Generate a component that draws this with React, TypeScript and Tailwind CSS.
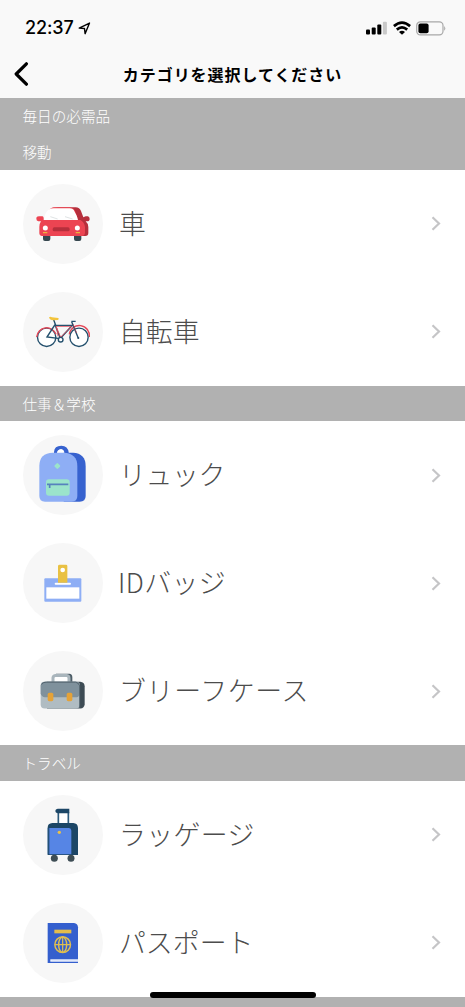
import type { ReactNode } from "react";

type Item = {
  label: string;
  icon: ReactNode;
  labelClass?: string;
};

type Section = {
  title: string;
  items: Item[];
};

type CategoryIconProps = {
  viewBox: string;
  children: ReactNode;
};

const CategoryIcon = ({ viewBox, children }: CategoryIconProps) => (
  <svg viewBox={viewBox} className="size-20" aria-hidden="true">
    {children}
  </svg>
);

const CarIcon = () => (
  <CategoryIcon viewBox="8 11 240 240">
    <path d="M94 81H166Q178 82 182 92L189 111L196 108H203Q208 110 208 116Q208 123 200 123H196Q204 130 204 140V158Q204 167 195 167H160L150 120L160 88Z" fill="#b62f3c" />
    <rect x="68" y="156" width="22" height="26" rx="6" fill="#36474f" />
    <rect x="161" y="156" width="22" height="26" rx="6" fill="#36474f" />
    <path d="M76 120L85 94Q89 82 100 81H148Q160 82 165 94L174 120Z" fill="#ec4452" />
    <path d="M72 119C71 105 79 91 87 87Q91 84 100 84H148Q158 84 163 94Q170 105 173 119Z" fill="#fff" />
    <path d="M90 109L112 116M134 109L157 116" stroke="#ced4d6" strokeWidth="2" />
    <path d="M48 115Q48 108 56 108H66Q71 109 70 119H180Q192 125 194 140V158Q193 167 184 167H65Q57 166 57 158V140Q57 130 62 123H54Q48 122 48 115Z" fill="#ec4452" />
    <rect x="97" y="141" width="51" height="12" rx="5" fill="#b62f3c" />
    <circle cx="75" cy="143" r="7.5" fill="#fff" />
    <circle cx="171" cy="143" r="7.5" fill="#fff" />
    <path d="M68 157H81M166 157H179" stroke="#edb33d" strokeWidth="4" />
  </CategoryIcon>
);

const BikeIcon = () => (
  <CategoryIcon viewBox="8 4 240 240">
    <circle cx="79" cy="140" r="29" fill="#fff" />
    <circle cx="176" cy="140" r="29" fill="#fff" />
    <g fill="none" strokeWidth="4.2">
      <circle cx="79" cy="140" r="27.5" stroke="#24506d" />
      <path d="M49 139A30 30 0 0 1 107 131M147 131A30 30 0 0 1 207 139" stroke="#e54858" />
      <circle cx="176" cy="140" r="27.5" stroke="#24506d" />
      <path d="M104 102L120 143L157 103M104 102L80 139L119 144" stroke="#24506d" />
      <path d="M106 107H153L121 140L108 109M109 111L113 137" stroke="#e54858" strokeWidth="2.5" />
      <path d="M100 87L106 104H158M153 92H166M154 93L174 143" stroke="#24506d" />
      <path d="M158 100L169 127" stroke="#c43f54" strokeWidth="2" />
      <circle cx="121" cy="147" r="7" fill="#fff" stroke="#24506d" />
    </g>
    <circle cx="174" cy="142" r="3" fill="#24506d" />
    <path d="M86 80Q90 77 95 80L114 82Q117 85 113 88L99 89Q88 89 86 80Z" fill="#f3c43c" />
  </CategoryIcon>
);

const BackpackIcon = () => (
  <CategoryIcon viewBox="8 10 240 240">
    <path d="M101 70V61Q102 42 123 42Q143 43 145 62V70H132V61Q130 52 121 53Q112 54 112 66V70Z" fill="#3762cf" />
    <path d="M110 70V62Q112 54 122 53Q130 54 131 63V70Z" fill="#fff" />
    <path d="M130 63H158Q196 65 196 103V193Q196 210 178 210H130Z" fill="#3762cf" />
    <path d="M57 103Q57 64 98 63H130Q171 65 171 103V193Q171 210 154 210H74Q57 210 57 193Z" fill="#8eaef5" />
    <rect x="104" y="96" width="14" height="14" rx="3" transform="rotate(45 111 103)" fill="#9be4cb" />
    <rect x="77" y="143" width="71" height="49" rx="9" fill="#9be4cb" />
    <path d="M80 158H144M88 158V169" stroke="#5682bd" strokeWidth="5" />
  </CategoryIcon>
);

const BadgeIcon = () => (
  <CategoryIcon viewBox="8 10 240 240">
    <rect x="72" y="116" width="111" height="70" rx="3" fill="#8eaef5" />
    <rect x="78" y="143" width="99" height="34" fill="#fff" />
    <rect x="103" y="129" width="49" height="6" rx="3" fill="#fff" />
    <path d="M113 79Q113 75 118 75H137Q141 75 141 79V129H113Z" fill="#e9c143" />
    <circle cx="127" cy="91" r="7" fill="#fff" />
  </CategoryIcon>
);

const BriefcaseIcon = () => (
  <CategoryIcon viewBox="8 3.5 240 240">
    <path d="M107 72H147Q156 73 156 82V100H141V84H107Z" fill="#4d5d67" />
    <path d="M98 98V84Q99 77 106 77H139Q146 78 146 85V98" fill="#fff" stroke="#a9b5bc" strokeWidth="9" />
    <path d="M80 96H180Q192 97 193 109V163Q192 175 180 176H80Z" fill="#3d4b54" />
    <rect x="61" y="96" width="118" height="80" rx="12" fill="#b0bcc2" />
    <path d="M61 108Q62 96 73 96H167Q178 97 179 108V130Q178 141 168 142H74Q63 141 61 130Z" fill="#7f919c" />
    <path d="M64 104Q67 97 77 97H165Q175 98 178 108V174" fill="none" stroke="#52636e" strokeWidth="3" />
    <rect x="82" y="129" width="17" height="25" rx="5" fill="#e4a238" />
    <rect x="139" y="129" width="17" height="25" rx="5" fill="#e4a238" />
  </CategoryIcon>
);

const LuggageIcon = () => (
  <CategoryIcon viewBox="8 6 240 240">
    <rect x="113" y="57" width="31" height="36" fill="#fff" />
    <path d="M114 57V94M144 57V94" stroke="#2c5a7c" strokeWidth="5" />
    <path d="M112 47H147V61H112Q105 60 105 54Q105 48 112 47Z" fill="#1c4666" />
    <path d="M82 104Q82 91 96 90H159Q172 91 173 104V186H82Z" fill="#1c4666" />
    <path d="M87 105H146Q153 106 153 113V184H87Z" fill="#5685e5" />
    <path d="M83 105V184" stroke="#34689e" strokeWidth="2" />
    <circle cx="102" cy="196" r="10.5" fill="#3e4d55" />
    <circle cx="152" cy="196" r="10.5" fill="#3e4d55" />
    <circle cx="117" cy="118" r="5" fill="#ebc146" />
  </CategoryIcon>
);

const PassportIcon = () => (
  <CategoryIcon viewBox="8 9 240 240">
    <path d="M82 69H161Q172 70 173 82V189H82Z" fill="#345fce" />
    <path d="M90 178H173V185H90Z" fill="#fff" />
    <path d="M93 182H173" stroke="#b8c8f2" strokeWidth="1.5" />
    <rect x="102" y="89" width="51" height="11" fill="#e3bd4c" />
    <g fill="none" stroke="#dfbe50" strokeWidth="4.4">
      <circle cx="127" cy="134" r="23.5" />
      <ellipse cx="127" cy="134" rx="12" ry="23" />
      <path d="M127 111V157M104 134H150" strokeWidth="3.6" />
    </g>
  </CategoryIcon>
);

const sections: Section[] = [
  { title: "毎日の必需品", items: [] },
  {
    title: "移動",
    items: [
      { label: "車", icon: <CarIcon /> },
      { label: "自転車", icon: <BikeIcon /> },
    ],
  },
  {
    title: "仕事＆学校",
    items: [
      { label: "リュック", icon: <BackpackIcon />, labelClass: "tracking-[-0.4px]" },
      { label: "IDバッジ", icon: <BadgeIcon />, labelClass: "tracking-[0.4px] -ml-px" },
      { label: "ブリーフケース", icon: <BriefcaseIcon />, labelClass: "tracking-[0.7px]" },
    ],
  },
  {
    title: "トラベル",
    items: [
      { label: "ラッゲージ", icon: <LuggageIcon />, labelClass: "tracking-[0.4px]" },
      { label: "パスポート", icon: <PassportIcon /> },
    ],
  },
];

const StatusBar = () => (
  <div className="flex h-[50px] items-center justify-between pt-[6px] pr-[19px] pl-[25px]">
    <div className="flex items-center gap-[4px]">
      <span className="font-['Inter','Liberation_Sans',sans-serif] text-[18px] leading-6 font-medium tracking-[-0.1px]">22:37</span>
      <svg width="13" height="13" viewBox="0 0 13 13" fill="none" stroke="currentColor" strokeWidth="1.4" strokeLinejoin="round" aria-hidden="true">
        <path d="M1.2 6.1L11.5 1.1L7.1 11.7L6.5 6.5Z" />
      </svg>
    </div>
    <div className="flex items-center">
      <svg width="21" height="14" viewBox="0 0 21 14" aria-hidden="true">
        <rect x="0" y="8.5" width="4" height="5" rx="1" />
        <rect x="5.7" y="6.5" width="4" height="7" rx="1" />
        <rect x="11.3" y="3.5" width="4" height="10" rx="1" />
        <rect x="16.9" y="0.7" width="4" height="12.8" rx="1" fill="#c9c9c9" />
      </svg>
      <svg className="ml-[6px]" width="18" height="14" viewBox="0 0 18 14" fill="none" stroke="currentColor" strokeWidth="2.7" aria-hidden="true">
        <path d="M0.9 5.1Q9 -1.8 17.1 5.1M3.8 8.6Q9 4.2 14.2 8.6" />
        <path d="M6 10.9Q9 8.5 12 10.9L9 13.7Z" fill="currentColor" stroke="none" />
      </svg>
      <svg className="ml-[5px]" width="30" height="15" viewBox="0 0 30 15" aria-hidden="true">
        <rect x="0.7" y="0.9" width="26.3" height="13" rx="3.6" fill="none" stroke="#a8a8a8" strokeWidth="1.2" />
        <rect x="2.4" y="2.5" width="10.2" height="9.8" rx="2" />
        <path d="M28.2 5Q30.4 7.4 28.2 9.8Z" fill="#a8a8a8" />
      </svg>
    </div>
  </div>
);

const Header = () => (
  <header className="h-[98px] shrink-0 bg-[#f9f9f9]">
    <StatusBar />
    <div className="grid h-12 grid-cols-[60px_1fr_60px] items-center">
      <button className="pl-[14px]" aria-label="戻る">
        <svg width="15" height="24" viewBox="0 0 15 24" fill="none" stroke="currentColor" strokeWidth="3.2" strokeLinecap="round" strokeLinejoin="round">
          <path d="M12.4 1.8L2.2 12L12.4 22.2" />
        </svg>
      </button>
      <h1 className="text-center text-[16px] leading-6 font-bold tracking-[0.95px] whitespace-nowrap">カテゴリを選択してください</h1>
    </div>
  </header>
);

const CategoryRow = ({ label, icon, labelClass = "" }: Item) => (
  <li className="flex h-[107.9px] items-center bg-white pr-[24px] pl-[22.6px]">
    <div className="flex size-20 shrink-0 items-center justify-center rounded-full bg-[#f7f7f7]">{icon}</div>
    <div className="flex-1 pb-[2px] pl-[16.4px] text-[26.9px] leading-9 font-light text-[#4c4c4c]">
      <span className={labelClass}>{label}</span>
    </div>
    <svg width="10" height="15" viewBox="0 0 10 15" fill="none" stroke="#c5c5c7" strokeWidth="2.2" aria-hidden="true">
      <path d="M1.5 1.2L8 7.5L1.5 13.8" />
    </svg>
  </li>
);

const SectionTitle = ({ title }: { title: string }) => (
  <h2 className="flex h-[35.9px] items-center bg-[#b1b1b1] pl-[22.5px] text-[14.6px] leading-5 font-light text-white">{title}</h2>
);

export default function App() {
  return (
    <div className="relative flex h-[1007px] w-[465px] flex-col overflow-hidden bg-[#b1b1b1] font-['Noto_Sans_CJK_JP',sans-serif] text-black">
      <Header />
      <main className="border-t border-[#a3a3a3]">
        {sections.map((section) => (
          <section key={section.title} className="first:-mt-px">
            <SectionTitle title={section.title} />
            <ul>
              {section.items.map((item) => (
                <CategoryRow key={item.label} {...item} />
              ))}
            </ul>
          </section>
        ))}
      </main>
      {/* Home indicator */}
      <div className="absolute bottom-[9px] left-1/2 h-[6px] w-[166px] -translate-x-1/2 rounded-full bg-black" />
    </div>
  );
}
